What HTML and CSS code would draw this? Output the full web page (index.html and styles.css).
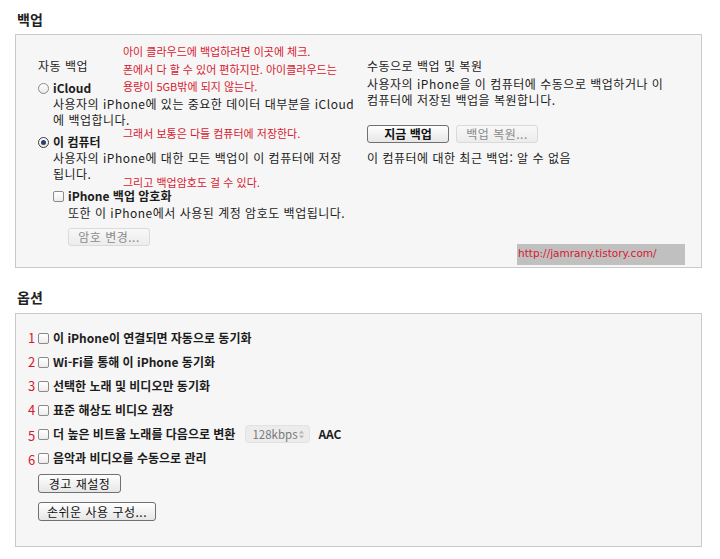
FILE: index.html
```html
<!DOCTYPE html>
<html lang="ko">
<head>
<meta charset="utf-8">
<link rel="stylesheet" href="styles.css">
</head>
<body>
<main class="page">
  <h2 class="sec-title">백업</h2>
  <div class="panel backup">
    <div class="col left">
      <div class="label">자동 백업</div>
      <div class="opt"><span class="radio"></span><b>iCloud</b></div>
      <p class="desc">사용자의 iPhone에 있는 중요한 데이터 대부분을 iCloud<br>에 백업합니다.</p>
      <div class="opt"><span class="radio on"></span><b>이 컴퓨터</b></div>
      <p class="desc">사용자의 iPhone에 대한 모든 백업이 이 컴퓨터에 저장<br>됩니다.</p>
      <div class="opt sub"><span class="check"></span><b>iPhone 백업 암호화</b></div>
      <p class="desc sub2">또한 이 iPhone에서 사용된 계정 암호도 백업됩니다.</p>
      <div class="btn-row sub2"><span class="btn disabled">암호 변경...</span></div>
    </div>
    <div class="col right">
      <div class="label">수동으로 백업 및 복원</div>
      <p class="rdesc">사용자의 iPhone을 이 컴퓨터에 수동으로 백업하거나 이<br>컴퓨터에 저장된 백업을 복원합니다.</p>
      <div class="btn-row pair"><span class="btn strong">지금 백업</span><span class="btn disabled">백업 복원...</span></div>
      <p class="last">이 컴퓨터에 대한 최근 백업: 알 수 없음</p>
    </div>
    <p class="note n1">아이 클라우드에 백업하려면 이곳에 체크.<br>폰에서 다 할 수 있어 편하지만. 아이클라우드는<br>용량이 5GB밖에 되지 않는다.</p>
    <p class="note n2">그래서 보통은 다들 컴퓨터에 저장한다.</p>
    <p class="note n3">그리고 백업암호도 걸 수 있다.</p>
    <div class="link">http://jamrany.tistory.com/</div>
  </div>

  <h2 class="sec-title second">옵션</h2>
  <div class="panel options">
    <div class="row"><span class="num">1</span><span class="check"></span><b>이 iPhone이 연결되면 자동으로 동기화</b></div>
    <div class="row"><span class="num">2</span><span class="check"></span><b>Wi-Fi를 통해 이 iPhone 동기화</b></div>
    <div class="row"><span class="num">3</span><span class="check"></span><b>선택한 노래 및 비디오만 동기화</b></div>
    <div class="row"><span class="num">4</span><span class="check"></span><b>표준 해상도 비디오 권장</b></div>
    <div class="row"><span class="num low">5</span><span class="check"></span><b>더 높은 비트율 노래를 다음으로 변환</b><span class="select"><span>128kbps</span><svg class="arrows" width="5" height="9" viewBox="0 0 5 9"><path d="M0 3.5 L2.5 0.5 L5 3.5 Z M0 5.5 L2.5 8.5 L5 5.5 Z" fill="#b5b5b5"/></svg></span><b class="aac">AAC</b></div>
    <div class="row"><span class="num low">6</span><span class="check"></span><b>음악과 비디오를 수동으로 관리</b></div>
    <div class="btn-row first"><span class="btn">경고 재설정</span></div>
    <div class="btn-row second"><span class="btn">손쉬운 사용 구성...</span></div>
  </div>
</main>
</body>
</html>
```

FILE: styles.css
```css
* { box-sizing: border-box; }
html, body { margin: 0; padding: 0; background: #ffffff; }
body {
  font-family: "Noto Sans CJK KR", "Noto Sans", sans-serif;
  font-size: 12px;
  line-height: 16px;
  color: #1c1c1c;
}
.page { padding: 9px 18px 0 15px; width: 720px; }
p { margin: 0; }
b { font-weight: 700; }

.sec-title {
  margin: 0 0 5px 2px;
  font-size: 14px;
  line-height: 20px;
  font-weight: 700;
  color: #222;
}
.sec-title.second { margin-top: 19px; margin-bottom: 6px; }

.panel {
  position: relative;
  width: 687px;
  background: #f6f6f6;
  border: 1px solid #c9c9c9;
}

/* backup panel */
.backup {
  display: grid;
  grid-template-columns: 329px 1fr;
  padding: 23px 0 21px 22px;
  height: 234px;
}
.label, .desc, .rdesc, .last { letter-spacing: 0.5px; }
.desc b, .rdesc b { letter-spacing: 0; }
.opt { display: flex; align-items: center; gap: 4px; margin-top: 6px; height: 16px; }
.opt.sub { margin-left: 15px; }
.desc { padding-left: 15px; }
.desc.sub2 { padding-left: 30px; margin-top: 1px; }
.btn-row.sub2 { padding-left: 30px; margin-top: 7px; }

.radio {
  width: 11px; height: 11px;
  border: 1px solid #8a8a8a;
  border-radius: 50%;
  background: linear-gradient(#ffffff, #e9e9e9);
  display: inline-flex; align-items: center; justify-content: center;
}
.radio.on { border-color: #3a3a3a; }
.radio.on::after {
  content: ""; width: 5px; height: 5px; border-radius: 50%;
  background: #27406e;
}
.check {
  width: 11px; height: 11px;
  border: 1px solid #8a8a8a;
  border-radius: 2px;
  background: linear-gradient(#ffffff, #ececec);
  flex: none;
}

.rdesc { margin-top: 2px; }
.btn-row { display: flex; gap: 7px; }
.btn-row.pair { margin-top: 17px; }
.last { margin-top: 7px; }

.btn {
  display: inline-flex; align-items: center; justify-content: center;
  min-width: 82px; height: 18px;
  padding: 0 4px;
  border: 1px solid #707070;
  border-radius: 3px;
  background: linear-gradient(#ffffff, #e6e6e6);
  font-size: 12px;
  line-height: 16px;
  letter-spacing: 0.5px;
  color: #111;
}
.btn.strong { font-weight: 700; letter-spacing: 0; }
.btn.disabled {
  border-color: #dadada;
  background: linear-gradient(#f8f8f8, #ececec);
  color: #8a8a8a;
}

.note {
  position: absolute;
  left: 107px;
  margin: 0;
  font-size: 11px;
  line-height: 17.5px;
  color: #d8182e;
}
.n1 { top: 8px; }
.n2 { top: 90px; }
.n3 { top: 139px; }

.link {
  position: absolute;
  left: 501px; top: 209px;
  width: 168px; height: 21px;
  background: #c0c0c0;
  color: #d8182e;
  font-family: "DejaVu Sans", sans-serif;
  font-size: 10.5px;
  line-height: 19px;
  padding-left: 1px;
}

/* options panel */
.options { padding: 12px 0 25px 12px; }
.row {
  display: flex; align-items: center;
  height: 24px;
}
.num {
  width: 7px;
  text-align: right;
  color: #d8182e;
  font-size: 13px;
  margin-right: 3px;
}
.num.low { position: relative; top: 2px; }
.row .check { margin-right: 4px; }
.select {
  display: inline-flex; align-items: center; justify-content: space-between;
  width: 65px; height: 18px;
  margin-left: 10px;
  padding: 0 5px 0 6px;
  background: #ececec;
  border: 1px solid #e2e2e2;
  border-radius: 4px;
  color: #7a7a7a;
  font-size: 11.5px;
}
.arrows { display: block; }
.aac { margin-left: 8px; }
.btn-row.first { margin: 4px 0 0 10px; }
.btn-row.first .btn { min-width: 83px; height: 19px; }
.btn-row.second { margin: 9px 0 0 10px; }
.btn-row.second .btn { min-width: 118px; height: 19px; }
```
